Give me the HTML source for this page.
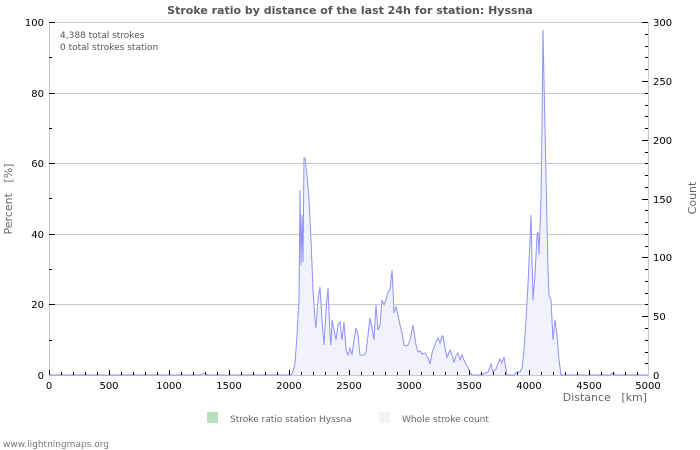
<!DOCTYPE html>
<html><head><meta charset="utf-8"><style>
html,body{margin:0;padding:0;background:#fff;}
svg{display:block;font-family:"DejaVu Sans","Liberation Sans",sans-serif;}
</style></head><body>
<svg width="700" height="450" viewBox="0 0 700 450" xmlns="http://www.w3.org/2000/svg">
<rect width="700" height="450" fill="#fff"/>
<text x="350" y="14" text-anchor="middle" font-size="11" font-weight="bold" fill="#555">Stroke ratio by distance of the last 24h for station: Hyssna</text>
<g stroke="#c8c8c8" stroke-width="1">
<line x1="49" y1="22.5" x2="649" y2="22.5"/>
<line x1="49" y1="93.5" x2="649" y2="93.5"/>
<line x1="49" y1="163.5" x2="649" y2="163.5"/>
<line x1="49" y1="234.5" x2="649" y2="234.5"/>
<line x1="49" y1="304.5" x2="649" y2="304.5"/>
<line x1="49" y1="375.5" x2="649" y2="375.5"/>
<line x1="49.5" y1="22" x2="49.5" y2="376"/>
<line x1="648.5" y1="22" x2="648.5" y2="376"/>
</g>
<polyline fill="#f2f2fc" stroke="#9090ff" stroke-width="1" points="49,375 200,375 205,373 207,375 280,375 287,375 291,375 293,372 295,363 297,335 299,300 300,190 301,265 302,215 303,262 304,158 305,158 307,175 309,200 311,240 313,290 315,320 316,328 318,300 320,287 322,320 324,345 326,310 328,288 330,335 331,345 332,320 334,330 336,340 338,325 340,322 342,340 344,322 346,350 348,355 350,348 352,355 354,340 356,328 358,335 360,355 362,355 364,355 366,352 370,318 372,328 374,340 376,305 378,330 380,325 382,300 384,305 386,300 388,292 390,290 392,270 393,290 394,313 396,307 398,315 400,325 402,333 404,345 406,346 408,345 410,340 413,325 416,345 418,352 420,351 422,354 425,353 428,358 430,364 432,353 436,342 438,338 440,343 442,336 443,336 445,348 447,357 450,350 452,355 454,362 456,356 458,353 460,360 462,355 464,360 466,364 468,368 470,372 472,375 480,375 484,374 488,372 491,364 493,372 496,369 500,359 502,363 504,357 507,375 514,375 517,372 520,372 522,368 524,350 526,320 528,285 530,240 531,215 532,260 533,300 535,275 537,235 538,232 539,255 541,200 542,130 543,30 544,80 546,175 548,270 549,295 551,300 553,340 555,320 557,335 559,360 561,375 610,375 613,373 616,375 648,375"/>
<g stroke="#000" stroke-width="1">
<path d="M49.5 375v-5M61.5 375v-3M73.5 375v-3M85.5 375v-3M97.5 375v-3M109.5 375v-5M121.5 375v-3M133.5 375v-3M145.5 375v-3M157.5 375v-3M169.5 375v-5M181.5 375v-3M193.5 375v-3M205.5 375v-3M217.5 375v-3M229.5 375v-5M241.5 375v-3M253.5 375v-3M265.5 375v-3M277.5 375v-3M289.5 375v-5M301.5 375v-3M313.5 375v-3M325.5 375v-3M337.5 375v-3M349.5 375v-5M361.5 375v-3M373.5 375v-3M385.5 375v-3M397.5 375v-3M409.5 375v-5M421.5 375v-3M433.5 375v-3M445.5 375v-3M457.5 375v-3M469.5 375v-5M481.5 375v-3M493.5 375v-3M505.5 375v-3M517.5 375v-3M529.5 375v-5M541.5 375v-3M553.5 375v-3M565.5 375v-3M577.5 375v-3M589.5 375v-5M601.5 375v-3M613.5 375v-3M625.5 375v-3M637.5 375v-3"/>
<path d="M49 22.5h6M49 57.5h3M49 93.5h6M49 128.5h3M49 163.5h6M49 198.5h3M49 234.5h6M49 269.5h3M49 304.5h6M49 340.5h3"/>
<path d="M648 22.5h-6M648 34.5h-3M648 46.5h-3M648 57.5h-3M648 69.5h-3M648 81.5h-6M648 93.5h-3M648 105.5h-3M648 116.5h-3M648 128.5h-3M648 140.5h-6M648 152.5h-3M648 163.5h-3M648 175.5h-3M648 187.5h-3M648 199.5h-6M648 210.5h-3M648 222.5h-3M648 234.5h-3M648 246.5h-3M648 257.5h-6M648 269.5h-3M648 281.5h-3M648 293.5h-3M648 304.5h-3M648 316.5h-6M648 328.5h-3M648 340.5h-3M648 352.5h-3M648 363.5h-3"/>
</g>
<g font-size="10" fill="#000">
<g text-anchor="end">
<text x="44" y="26">100</text><text x="44" y="97">80</text><text x="44" y="167">60</text><text x="44" y="238">40</text><text x="44" y="308">20</text><text x="44" y="379">0</text>
</g>
<g text-anchor="start">
<text x="653" y="26">300</text><text x="653" y="85">250</text><text x="653" y="144">200</text><text x="653" y="203">150</text><text x="653" y="261">100</text><text x="653" y="320">50</text><text x="653" y="379">0</text>
</g>
<g text-anchor="middle">
<text x="49" y="389">0</text><text x="109" y="389">500</text><text x="169" y="389">1000</text><text x="229" y="389">1500</text><text x="289" y="389">2000</text><text x="349" y="389">2500</text><text x="409" y="389">3000</text><text x="469" y="389">3500</text><text x="529" y="389">4000</text><text x="589" y="389">4500</text><text x="648" y="389">5000</text>
</g>
</g>
<text x="647" y="401" text-anchor="end" font-size="11" fill="#666" xml:space="preserve" style="white-space:pre">Distance   [km]</text>
<text transform="translate(12,199) rotate(-90)" text-anchor="middle" font-size="11" fill="#666" xml:space="preserve" style="white-space:pre">Percent   [%]</text>
<text transform="translate(696,198) rotate(-90)" text-anchor="middle" font-size="11" fill="#666">Count</text>
<text x="60" y="38" font-size="9" fill="#555">4,388 total strokes</text>
<text x="60" y="50" font-size="9" fill="#555">0 total strokes station</text>
<rect x="207" y="412" width="11" height="11" fill="#b8e0b8"/>
<text x="230" y="422" font-size="9" fill="#666">Stroke ratio station Hyssna</text>
<rect x="379" y="412" width="11" height="11" fill="#f2f2fc"/>
<text x="402" y="422" font-size="9" fill="#666">Whole stroke count</text>
<text x="3" y="447" font-size="9" fill="#777">www.lightningmaps.org</text>
</svg>
</body></html>
